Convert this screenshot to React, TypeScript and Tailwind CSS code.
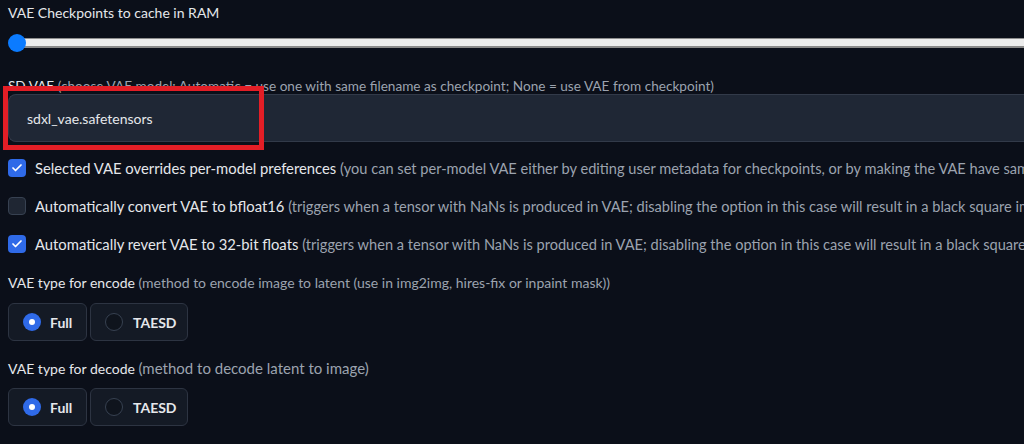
import { Check } from "lucide-react"

const font = "font-['Lato','Noto_Sans',sans-serif]"

function CheckRow({ checked, label, note }: { checked: boolean; label: string; note: string }) {
  return (
    <div className="flex items-center h-[18px] gap-[9px] whitespace-nowrap">
      {checked ? (
        <div className="w-[18px] h-[18px] shrink-0 rounded-[4px] bg-[#2f6ae8] flex items-center justify-center">
          <Check className="w-3 h-3 text-white" strokeWidth={3.5} />
        </div>
      ) : (
        <div className="w-[18px] h-[18px] shrink-0 rounded-[4px] bg-[#1f2633] border border-[#374151]" />
      )}
      <span className="text-[#e5e7eb] text-[14.8px]">
        {label} <span className="text-[#9ca3af] text-[14.6px]">{note}</span>
      </span>
    </div>
  )
}

function RadioGroup() {
  return (
    <div className="flex gap-[3px]">
      <div className="h-[38px] w-[79px] rounded-[6px] border border-[#2d3442] bg-[#141a25] flex items-center pl-[14px] gap-[9px]">
        <div className="w-[18px] h-[18px] rounded-full bg-[#2f6ae8] flex items-center justify-center">
          <div className="w-[6px] h-[6px] rounded-full bg-white" />
        </div>
        <span className="text-[#e5e7eb] font-bold">Full</span>
      </div>
      <div className="h-[38px] w-[98px] rounded-[6px] border border-[#2d3442] bg-[#141a25] flex items-center pl-[14px] gap-[10px]">
        <div className="w-[18px] h-[18px] rounded-full border border-[#374151] bg-[#0f141d]" />
        <span className="text-[#e5e7eb] font-bold">TAESD</span>
      </div>
    </div>
  )
}

export default function App() {
  return (
    <div className={`relative w-[1024px] h-[444px] overflow-hidden bg-[#0b0f19] text-[14px] ${font}`}>
      <div className="flex flex-col pl-2 pt-[3px]">
        {/* cache slider */}
        <div className="h-5 leading-5 text-[#e5e7eb]">VAE Checkpoints to cache in RAM</div>
        <div className="relative mt-[11px] h-[18px] flex items-center">
          <div className="ml-[10px] flex-1 h-[10px] bg-[#ececec] border-t border-[#8e8e8e] border-b-2 border-b-[#8a8a8a]" />
          <div className="absolute left-0 top-0 w-[18px] h-[18px] rounded-full bg-[#0b7bff]" />
        </div>

        {/* SD VAE dropdown */}
        <div className="mt-[26px] h-4 leading-4 whitespace-nowrap text-[#e5e7eb] text-[13.6px]">
          SD VAE <span className="text-[#9ca3af]">(choose VAE model: Automatic = use one with same filename as checkpoint; None = use VAE from checkpoint)</span>
        </div>
        <div className="h-[48px] rounded-l-[8px] bg-[#1f2735] border-y border-l border-[#323a49] flex items-center pl-[18px] text-[#e5e7eb]">
          sdxl_vae.safetensors
        </div>

        {/* checkboxes */}
        <div className="mt-[17px] flex flex-col gap-5">
          <CheckRow
            checked
            label="Selected VAE overrides per-model preferences"
            note="(you can set per-model VAE either by editing user metadata for checkpoints, or by making the VAE have same name as checkpoint)"
          />
          <CheckRow
            checked={false}
            label="Automatically convert VAE to bfloat16"
            note="(triggers when a tensor with NaNs is produced in VAE; disabling the option in this case will result in a black square image)"
          />
          <CheckRow
            checked
            label="Automatically revert VAE to 32-bit floats"
            note="(triggers when a tensor with NaNs is produced in VAE; disabling the option in this case will result in a black square image)"
          />
        </div>

        {/* encode */}
        <div className="mt-[20px] h-5 leading-5 text-[#e5e7eb] whitespace-nowrap">
          VAE type for encode <span className="text-[#9ca3af]">(method to encode image to latent (use in img2img, hires-fix or inpaint mask))</span>
        </div>
        <div className="mt-[10px]">
          <RadioGroup />
        </div>

        {/* decode */}
        <div className="mt-[17px] h-5 leading-5 text-[#e5e7eb] whitespace-nowrap">
          VAE type for decode <span className="text-[#9ca3af] text-[15px]">(method to decode latent to image)</span>
        </div>
        <div className="mt-[10px]">
          <RadioGroup />
        </div>
      </div>

      {/* highlight box */}
      <div className="absolute left-[3px] top-[86px] w-[261px] h-[64px] border-[5px] border-[#e31e26]" />
    </div>
  )
}
